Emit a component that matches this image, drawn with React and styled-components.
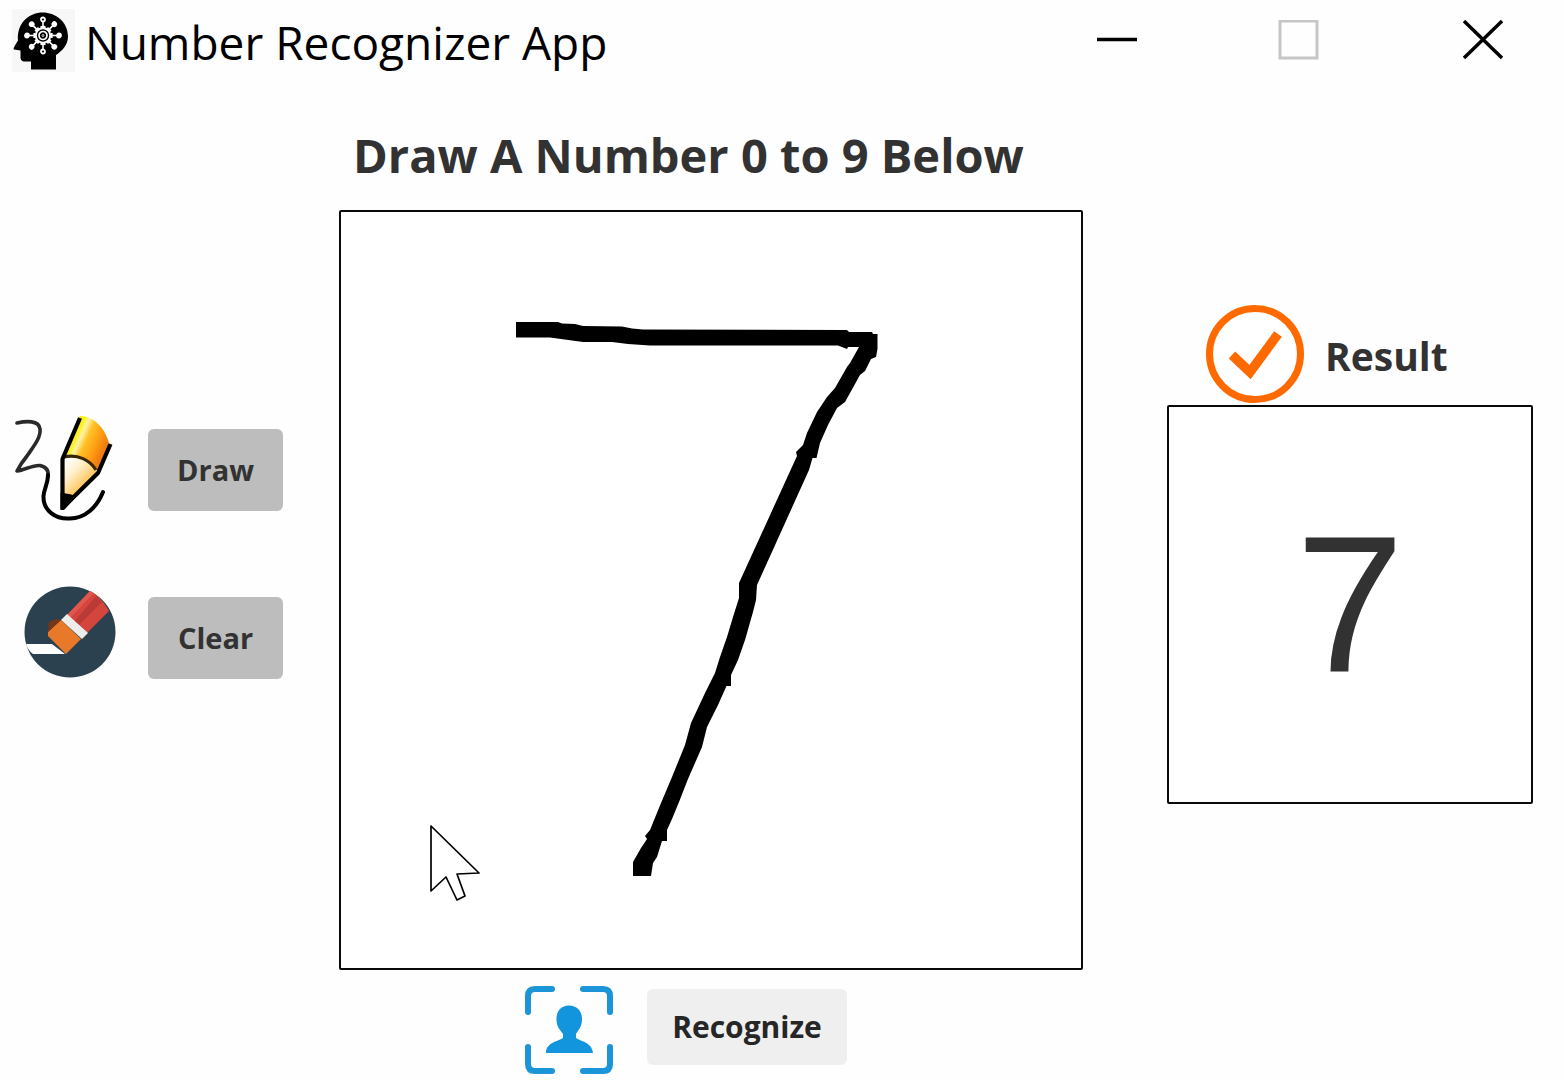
import React from "react";
import styled, { createGlobalStyle } from "styled-components";

const GlobalStyle = createGlobalStyle`
  *, *::before, *::after { box-sizing: border-box; }
  body {
    margin: 0;
    background: #fefefe;
    color: #323232;
    font-family: "Open Sans", "Noto Sans", sans-serif;
  }
`;

const Window = styled.div`
  display: flex;
  flex-direction: column;
  min-height: 100vh;
`;

const TitleBar = styled.header`
  display: flex;
  align-items: center;
  height: 80px;
  padding-left: 12px;
  gap: 10px;
`;

const AppTitle = styled.span`
  flex: 1;
  padding-top: 4px;
  color: #000;
  font-size: 46px;
  line-height: 64px;
  white-space: nowrap;
`;

const WindowControls = styled.div`
  display: flex;
  gap: 21px;
`;

const WindowButton = styled.button`
  display: grid;
  place-items: center;
  width: 162px;
  height: 80px;
  padding: 0;
  border: 0;
  background: none;
  color: ${(p) => (p.disabled ? "#c6c6c6" : "#000")};
`;

const Workspace = styled.main`
  flex: 1;
  display: grid;
  grid-template-columns: 339px minmax(0, 1fr) 481px;
`;

const Tools = styled.section`
  display: flex;
  flex-direction: column;
  justify-content: center;
  gap: 64px;
  padding: 0 0 52px 14px;
`;

const ToolRow = styled.div`
  display: flex;
  align-items: center;
  gap: 22px;
  height: 104px;
`;

const ActionButton = styled.button`
  min-width: ${(p) => (p.$wide ? 200 : 135)}px;
  height: ${(p) => (p.$wide ? 76 : 82)}px;
  padding: 0 16px;
  border: 0;
  border-radius: 6px;
  background: ${(p) => (p.$wide ? "#efefef" : "#bdbdbd")};
  color: ${(p) => (p.$wide ? "#262626" : "#323232")};
  font: 700 ${(p) => (p.$wide ? 30 : 29)}px/40px "Open Sans", "Noto Sans", sans-serif;
`;

const DrawArea = styled.section`
  display: flex;
  flex-direction: column;
`;

const Heading = styled.h1`
  margin: 0;
  padding: 43px 0 23px 14px;
  font-size: 47px;
  line-height: 64px;
  font-weight: 700;
  white-space: nowrap;
`;

const Board = styled.div`
  border: 2px solid #0a0a0a;
  background: #fff;
  border-radius: 2px;

  svg {
    display: block;
    width: 100%;
    height: auto;
  }
`;

const RecognizeRow = styled.div`
  display: flex;
  justify-content: center;
  align-items: center;
  gap: 34px;
  padding: 10px 50px 0 0;
`;

const ResultArea = styled.section`
  display: flex;
  flex-direction: column;
  justify-content: center;
  padding: 0 31px 52px 84px;
`;

const ResultHeader = styled.div`
  display: flex;
  align-items: center;
  gap: 20px;
  padding-left: 38px;
`;

const ResultTitle = styled.h2`
  margin: 0;
  padding-top: 2px;
  font-size: 39px;
  line-height: 56px;
  font-weight: 700;
`;

const ResultBox = styled.output`
  display: grid;
  place-items: center;
  height: 399px;
  border: 2px solid #0a0a0a;
  border-radius: 2px;
  background: #fff;
  color: #323232;
  font: 195px/224px "Liberation Sans", Arial, sans-serif;
`;

const SPOKES = [0, 45, 90, 135, 180, 225, 270, 315];

function HeadIcon() {
  return (
    <svg width="63" height="63" viewBox="12 8 63 63" aria-hidden="true">
      <rect x="12" y="8" width="63" height="63" fill="#f7f7f7" />
      <path
        d="M43 11.500C54.500 11.500 68 20 68 35.500C68 44 62 50 56 54V68.500H31V60.500H25C21.500 60.500 20.500 58.500 20.500 56V49.500L14 48.500C13 48 14 46 18 39.500C16.500 22 29 11.500 43 11.500Z"
        fill="#000"
      />
      <g transform="translate(43 34.500)" stroke="#fff" fill="none">
        {SPOKES.map((angle) => (
          <g key={angle} transform={`rotate(${angle})`}>
            <path d="M0 -8V-14" strokeWidth="1.600" />
            <circle cx="0" cy="-16" r="2" strokeWidth="1.800" fill={angle % 180 ? "#fff" : "none"} />
            <path d="M-2.500 -8.500H2.500" strokeWidth="2.200" />
          </g>
        ))}
        <circle r="7.200" strokeWidth="2" />
        <circle r="4" strokeWidth="1.700" />
        <circle r="1" strokeWidth="0.800" />
      </g>
    </svg>
  );
}

function PencilIcon() {
  return (
    <svg width="112" height="110" viewBox="14 415 112 110" aria-hidden="true">
      <defs>
        <linearGradient id="pencilBody" x1="68" y1="434" x2="103" y2="450" gradientUnits="userSpaceOnUse">
          <stop offset="0" stopColor="#e3e800" />
          <stop offset="0.220" stopColor="#fff21c" />
          <stop offset="0.340" stopColor="#fff2a8" />
          <stop offset="0.500" stopColor="#ffc226" />
          <stop offset="0.800" stopColor="#ff9a12" />
          <stop offset="1" stopColor="#ef7d12" />
        </linearGradient>
        <linearGradient id="pencilWood" x1="64" y1="462" x2="88" y2="486" gradientUnits="userSpaceOnUse">
          <stop offset="0" stopColor="#fff" />
          <stop offset="0.400" stopColor="#fff0cd" />
          <stop offset="1" stopColor="#ffbd45" />
        </linearGradient>
      </defs>
      <path
        d="M17 423C26 421 39 420 40 429C41 438 33 447 27 456C22 462 19 467 17 471C25 470 32 465 40 465.500C47 467 49 471 48 477"
        fill="none"
        stroke="#2a2a2a"
        strokeWidth="3.600"
        strokeLinecap="round"
        strokeLinejoin="round"
      />
      <path
        d="M48 475C48 484 44 489 43.500 496C43 511 56 519 69 518.500C85 519 97 507 103 492"
        fill="none"
        stroke="#000"
        strokeWidth="4"
        strokeLinecap="round"
      />
      <path d="M80 416C94 416 105 428 109 443L98 472C91 459 80 456 64 458Z" fill="url(#pencilBody)" />
      <path d="M63 458C79 455 92 460 97 473L63 507Z" fill="url(#pencilWood)" />
      <path d="M63 493C67 494 70 493 76 497L64 510L60.500 510V493Z" fill="#000" />
      <path d="M64 457C78 454 90 460 96 470" fill="none" stroke="#3a2600" strokeWidth="3.200" />
      <path
        d="M80 418L62.500 459V508L98 473L110.500 444"
        fill="none"
        stroke="#000"
        strokeWidth="4.200"
        strokeLinejoin="round"
      />
    </svg>
  );
}

function EraserIcon() {
  return (
    <svg width="112" height="106" viewBox="14 585 112 106" aria-hidden="true">
      <circle cx="70" cy="632" r="45.500" fill="#2c414f" />
      <path d="M26 644H52L65 654H33C30 652 27 648 26 644Z" fill="#fff" />
      <path d="M90 591C98 595 104 602 109 611L86 634L67 615Z" fill="#d4453d" />
      <path d="M96 596L102 602L78 626L74 622Z" fill="#b93a36" />
      <path d="M90 591L94 593L70 618L67 615Z" fill="#e2574c" />
      <path d="M67 614L88 633L82 639L61 620Z" fill="#ececec" />
      <path d="M61 620L81 639L66 654L48 636V632Z" fill="#e9792a" />
      <path d="M48 632L61 620L57 619L49 622Z" fill="#7a3515" />
    </svg>
  );
}

function CheckIcon() {
  return (
    <svg width="100" height="100" viewBox="1205 305 100 100" aria-hidden="true">
      <circle cx="1255" cy="354" r="45.500" fill="#fff" stroke="#ff6a00" strokeWidth="7" />
      <path d="M1232 355L1250 372L1278 334" fill="none" stroke="#ff6a00" strokeWidth="9.500" />
    </svg>
  );
}

function PersonScanIcon() {
  return (
    <svg width="88" height="94" viewBox="525 980 88 94" aria-hidden="true">
      <path
        d="M552 989H535Q528 989 528 996V1012M583 989H603Q610 989 610 996V1012M528 1047V1064Q528 1071 535 1071H552M583 1071H603Q610 1071 610 1064V1047"
        fill="none"
        stroke="#1b95d8"
        strokeWidth="6"
        strokeLinecap="round"
      />
      <path
        d="M569 1005.500C577 1005.500 582 1011 582 1019C582 1027 578.500 1030 576 1034V1038C583 1042 592 1043 593 1053H546C546 1043 556 1042 563 1038V1034C560 1030 556.500 1027 556.500 1019C556.500 1011 561 1005.500 569 1005.500Z"
        fill="#1295dc"
      />
    </svg>
  );
}

function Drawing() {
  return (
    <svg viewBox="341 212 740 756" role="img" aria-label="Handwritten seven">
      <path
        d="M516 322H558L562 323.500L575 324L583 326L622 326.500L632 328.500L643 329.500L847 330L849 332H872L873 334H877.500V349L876 357L871 359L865 371L860 375L845 402L837 408L828 425L820 443L816.500 458H812.500L809 470L757 585L756 600L753 612L745 640L738 660L731 675V686H726.500L718 705L707 727L702 747L688 779L679 802L672 819L667 830V841H662L657 857L653 863L651 876H633V862L641 848L647 839L645 836L650 830L661 803L672 777L685 745L691 723L705 693L715 673L720 657L727 637L733 617L739 598V583L797 456L796 452L803 445L807 433L817 412L827 397L835 388L847 367L850 363L859 347H848L847 349L838 345.500H650L628 344L612 342H583L572 340.500L550 337.500H516Z"
        fill="#000"
      />
      <path
        d="M431 826V891L446 877L457 900L465 896L457 874L479 873Z"
        fill="#fff"
        stroke="#000"
        strokeWidth="1.700"
        strokeLinejoin="round"
      />
    </svg>
  );
}

export default function App() {
  return (
    <Window>
      <GlobalStyle />
      <TitleBar>
        <HeadIcon />
        <AppTitle>Number Recognizer App</AppTitle>
        <WindowControls>
          <WindowButton type="button" aria-label="Minimize">
            <svg width="40" height="40" stroke="currentColor" fill="none">
              <path d="M0 19.500H40" strokeWidth="3.400" />
            </svg>
          </WindowButton>
          <WindowButton type="button" aria-label="Maximize" disabled>
            <svg width="44" height="40" stroke="currentColor" fill="none">
              <rect x="2" y="1" width="37" height="37" strokeWidth="3" />
            </svg>
          </WindowButton>
          <WindowButton type="button" aria-label="Close">
            <svg width="40" height="40" stroke="currentColor" fill="none">
              <path d="M1 1L39 38M39 1L1 38" strokeWidth="3.400" />
            </svg>
          </WindowButton>
        </WindowControls>
      </TitleBar>
      <Workspace>
        <Tools>
          <ToolRow>
            <PencilIcon />
            <ActionButton type="button">Draw</ActionButton>
          </ToolRow>
          <ToolRow>
            <EraserIcon />
            <ActionButton type="button">Clear</ActionButton>
          </ToolRow>
        </Tools>
        <DrawArea>
          <Heading>Draw A Number 0 to 9 Below</Heading>
          <Board>
            <Drawing />
          </Board>
          <RecognizeRow>
            <PersonScanIcon />
            <ActionButton type="button" $wide>
              Recognize
            </ActionButton>
          </RecognizeRow>
        </DrawArea>
        <ResultArea>
          <ResultHeader>
            <CheckIcon />
            <ResultTitle>Result</ResultTitle>
          </ResultHeader>
          <ResultBox>7</ResultBox>
        </ResultArea>
      </Workspace>
    </Window>
  );
}
